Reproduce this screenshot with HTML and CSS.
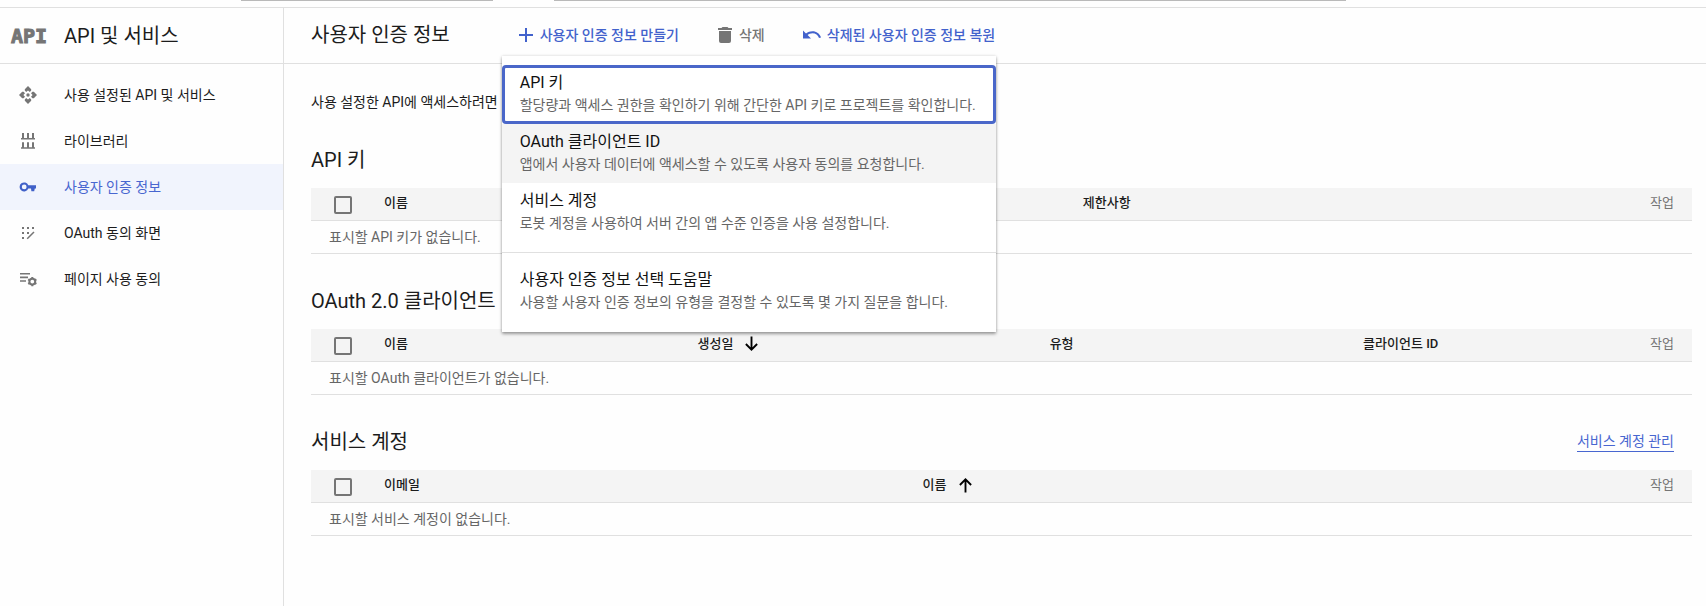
FILE: index.html
```html
<!DOCTYPE html>
<html lang="ko">
<head>
<meta charset="utf-8">
<title>사용자 인증 정보</title>
<link rel="stylesheet" href="styles.css">
</head>
<body>
<div class="topbar">
  <span class="picker-edge"></span>
  <span class="search-edge"></span>
</div>
<div class="shell">
  <aside class="sidebar">
    <div class="product">
      <span class="product-logo">API</span>
      <span class="product-name">API 및 서비스</span>
    </div>
    <nav class="nav">
      <a class="nav-item" href="#">
        <svg class="icon" viewBox="0 0 18 18"><g id="arm"><path d="M9 0l3.200 3.200v1.400L10.800 6 9 4.400 7.200 6 5.800 4.600V3.200z"/></g><use href="#arm" transform="rotate(90 9 9)"/><use href="#arm" transform="rotate(180 9 9)"/><use href="#arm" transform="rotate(270 9 9)"/><circle cx="9" cy="9" r="1.700"/></svg>
        <span>사용 설정된 API 및 서비스</span>
      </a>
      <a class="nav-item" href="#">
        <svg class="icon" viewBox="0 0 18 18"><path d="M3 1h2v5h3V1h2v5h3V1h2v5h1v1.500H2V6h1zM3 10.300h2v5h3v-5h2v5h3v-5h2v5h1v1.500H2v-1.500h1z"/></svg>
        <span>라이브러리</span>
      </a>
      <a class="nav-item active" href="#">
        <svg class="icon" viewBox="0 0 18 18"><path fill-rule="evenodd" d="M9.300 7.300H17v3.200h-1.200l-.6 2.700h-2.800l-.4-2.700H9.300A4.500 4.500 0 1 1 9.300 7.300zM5.200 6.500a2.400 2.400 0 1 0 0 4.800 2.400 2.400 0 0 0 0-4.800z"/></svg>
        <span>사용자 인증 정보</span>
      </a>
      <a class="nav-item" href="#">
        <svg class="icon" viewBox="0 0 18 18"><path d="M3 3h2v2H3zM8 3h2v2H8zM13 3h2v2h-2zM3 8h2v2H3zM8 8h2v2H8zM3 13h2v2H3z"/><path d="M8.200 14.800L15 8" fill="none" stroke="currentColor" stroke-width="1.500"/></svg>
        <span>OAuth 동의 화면</span>
      </a>
      <a class="nav-item" href="#">
        <svg class="icon" viewBox="0 0 18 18"><path d="M1 3h10v1.600H1zM1 6.600h8v1.600H1zM1 10.200h6v1.600H1z"/><circle cx="13.300" cy="11.600" r="2.900" fill="none" stroke="currentColor" stroke-width="2"/><path d="M13.300 6.900v2M13.300 14.300v2M9.200 9.300l1.700 1M15.700 12.900l1.700 1M9.200 13.900l1.700-1M15.700 10.300l1.700-1" stroke="currentColor" stroke-width="2"/></svg>
        <span>페이지 사용 동의</span>
      </a>
    </nav>
  </aside>
  <main class="main">
    <header class="toolbar">
      <h1 class="page-title">사용자 인증 정보</h1>
      <div class="create">
        <button class="tool" type="button">
          <svg class="tool-icon" viewBox="0 0 16 16"><path d="M7 1h2v6h6v2H9v6H7V9H1V7h6z"/></svg>
          <span>사용자 인증 정보 만들기</span>
        </button>
        <ul class="menu">
          <li><button class="option focused" type="button"><span class="option-title">API 키</span><span class="option-text">할당량과 액세스 권한을 확인하기 위해 간단한 API 키로 프로젝트를 확인합니다.</span></button></li>
          <li><button class="option hovered" type="button"><span class="option-title">OAuth 클라이언트 ID</span><span class="option-text">앱에서 사용자 데이터에 액세스할 수 있도록 사용자 동의를 요청합니다.</span></button></li>
          <li><button class="option" type="button"><span class="option-title">서비스 계정</span><span class="option-text">로봇 계정을 사용하여 서버 간의 앱 수준 인증을 사용 설정합니다.</span></button></li>
          <li class="menu-group"><button class="option" type="button"><span class="option-title">사용자 인증 정보 선택 도움말</span><span class="option-text">사용할 사용자 인증 정보의 유형을 결정할 수 있도록 몇 가지 질문을 합니다.</span></button></li>
        </ul>
      </div>
      <button class="tool muted" type="button">
        <svg class="tool-icon" viewBox="0 0 16 16"><path d="M5.500 0h5l1 1H15v2H1V1h3.500zM2 4h12v10a2 2 0 0 1-2 2H4a2 2 0 0 1-2-2z"/></svg>
        <span>삭제</span>
      </button>
      <button class="tool" type="button">
        <svg class="tool-icon wide" viewBox="0 0 18 16"><path d="M0 3.500l3 3C5 5 7 4.200 9.500 4.200c4 0 7.200 2.400 8.500 6.200l-2 .7C15 8.200 12.500 6.300 9.500 6.300c-2 0-3.600.7-4.900 1.800L8 11.500H0z"/></svg>
        <span>삭제된 사용자 인증 정보 복원</span>
      </button>
    </header>
    <div class="content">
      <p class="intro">사용 설정한 API에 액세스하려면</p>
      <section class="section">
        <div class="section-head"><h2>API 키</h2></div>
        <table class="grid">
          <colgroup><col class="col-check"><col class="col-key-name"><col></colgroup>
          <thead><tr>
            <th class="check"><input type="checkbox" aria-label="API 키 모두 선택"></th>
            <th>이름</th>
            <th><div class="last"><span>제한사항</span><span class="action">작업</span></div></th>
          </tr></thead>
          <tbody><tr><td colspan="3">표시할 API 키가 없습니다.</td></tr></tbody>
        </table>
      </section>
      <section class="section">
        <div class="section-head"><h2>OAuth 2.0 클라이언트</h2></div>
        <table class="grid">
          <colgroup><col class="col-check"><col class="col-name"><col class="col-date"><col class="col-name"><col></colgroup>
          <thead><tr>
            <th class="check"><input type="checkbox" aria-label="OAuth 클라이언트 모두 선택"></th>
            <th>이름</th>
            <th><span class="sort">생성일 <svg class="arrow" viewBox="0 0 16 16"><path d="M8 0v14M2 8l6 6 6-6"/></svg></span></th>
            <th>유형</th>
            <th><div class="last"><span>클라이언트 ID</span><span class="action">작업</span></div></th>
          </tr></thead>
          <tbody><tr><td colspan="5">표시할 OAuth 클라이언트가 없습니다.</td></tr></tbody>
        </table>
      </section>
      <section class="section">
        <div class="section-head"><h2>서비스 계정</h2><a class="manage" href="#">서비스 계정 관리</a></div>
        <table class="grid">
          <colgroup><col class="col-check"><col class="col-email"><col></colgroup>
          <thead><tr>
            <th class="check"><input type="checkbox" aria-label="서비스 계정 모두 선택"></th>
            <th>이메일</th>
            <th><div class="last"><span class="sort">이름 <svg class="arrow" viewBox="0 0 16 16"><path d="M8 16V2M2 8l6-6 6 6"/></svg></span><span class="action">작업</span></div></th>
          </tr></thead>
          <tbody><tr><td colspan="3">표시할 서비스 계정이 없습니다.</td></tr></tbody>
        </table>
      </section>
    </div>
  </main>
</div>
</body>
</html>
```
FILE: styles.css
```css
* { box-sizing: border-box; }

body {
  margin: 0;
  min-height: 100vh;
  display: flex;
  flex-direction: column;
  background: #fefefe;
  color: #1c1c1c;
  font: 14px/20px Roboto, "Noto Sans CJK KR", sans-serif;
}

button { font: inherit; border: 0; background: none; padding: 0; cursor: pointer; }

/* Lower edges of the console's project picker and search box */
.topbar {
  display: flex;
  gap: 61px;
  height: 8px;
  padding: 0 360px 0 241px;
  border-bottom: 1px solid #e0e0e0;
}
.picker-edge, .search-edge { height: 1px; background: #b9b9b9; }
.picker-edge { width: 252px; }
.search-edge { flex: 1; }

.shell { flex: 1; display: flex; }

.sidebar { width: 284px; flex: none; border-right: 1px solid #e0e0e0; }
.product {
  display: flex;
  align-items: center;
  height: 56px;
  padding-left: 11px;
  border-bottom: 1px solid #e0e0e0;
}
.product-logo {
  width: 53px;
  color: #757575;
  font: bold 20px/24px "DejaVu Sans Mono", monospace;
  -webkit-text-stroke: 1px #757575;
}
.product-name { font-size: 20px; line-height: 28px; }

.nav { padding-top: 8px; }
.nav-item {
  display: flex;
  align-items: center;
  gap: 27px;
  height: 46px;
  padding-left: 19px;
  color: inherit;
  text-decoration: none;
}
.nav-item.active { background: #f1f4fd; color: #4866d0; }
.icon { width: 18px; height: 18px; fill: currentColor; color: #757575; }
.active .icon { color: #4060c8; }

.main { flex: 1; min-width: 0; }
.toolbar {
  display: flex;
  align-items: center;
  height: 56px;
  padding: 0 0 2px 27px;
  gap: 38px;
  border-bottom: 1px solid #e0e0e0;
}
.page-title { margin: 0 30px 0 0; font-size: 20px; line-height: 28px; font-weight: 400; }
.tool {
  display: flex;
  align-items: center;
  gap: 6px;
  color: #4262cc;
  font-weight: 500;
}
.tool.muted { color: #757575; }
.tool-icon { width: 16px; height: 16px; fill: currentColor; }
.tool-icon.wide { width: 18px; }

.create { position: relative; }
.menu {
  position: absolute;
  top: 31px;
  left: -16px;
  z-index: 2;
  margin: 0;
  padding: 9px 0 11px;
  list-style: none;
  background: #fff;
  box-shadow: 0 2px 3px rgba(0, 0, 0, .35), 0 0 3px rgba(0, 0, 0, .14);
}
.menu-group { margin-top: 10px; padding-top: 9px; border-top: 1px solid #e0e0e0; }
.option {
  display: flex;
  flex-direction: column;
  width: 100%;
  height: 59px;
  padding: 6px 20px 6px 18px;
  text-align: left;
  white-space: nowrap;
}
.option.focused { border-radius: 4px; box-shadow: inset 0 0 0 3px #4a67c9; }
.option.hovered { background: #f4f4f4; }
.option-title { font-size: 16px; line-height: 24px; color: #111; }
.option-text { color: #666; }

.content { padding: 28px 14px 0 27px; }
.intro { margin: 0; }
.section-head {
  display: flex;
  align-items: center;
  justify-content: space-between;
  height: 75px;
  padding: 18px 18px 0 0;
}
.section-head h2 { margin: 0; font-size: 20px; line-height: 28px; font-weight: 400; }
.section:first-of-type .section-head { height: 76px; padding-top: 20px; }
.manage { color: #4866d0; text-decoration: none; border-bottom: 1px solid; }

.grid { width: 100%; table-layout: fixed; border-collapse: separate; border-spacing: 0; }
.grid th {
  height: 33px;
  padding: 0 0 2px;
  background: #f4f4f4;
  border-bottom: 1px solid #e0e0e0;
  font-size: 13px;
  font-weight: 500;
  text-align: left;
}
.grid td { height: 33px; padding: 0 18px; border-bottom: 1px solid #e0e0e0; color: #666; }
.grid .check { padding: 1px 0 0 23px; }
.check input {
  appearance: none;
  display: block;
  width: 18px;
  height: 18px;
  margin: 0;
  border: 2px solid #757575;
  border-radius: 2px;
}
.col-check { width: 73px; }
.col-key-name { width: 50.6%; }
.col-name { width: 22.7%; }
.col-date { width: 25.5%; }
.col-email { width: 39%; }
.last { display: flex; align-items: center; justify-content: space-between; padding-right: 18px; }
.action { color: #757575; font-weight: 400; }
.sort { display: flex; align-items: center; gap: 11px; }
.arrow { width: 15px; height: 16px; fill: none; stroke: #000; stroke-width: 2; }
```
